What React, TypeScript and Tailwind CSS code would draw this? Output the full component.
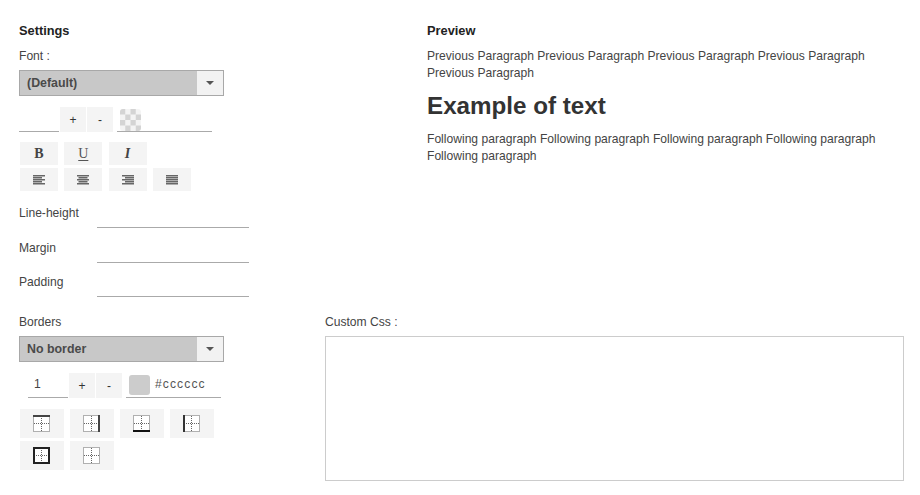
import React from 'react';

const SelectBox = ({ label }: { label: string }) => (
  <div className="flex h-[26px] w-[205px] border border-[#a8a8a8] bg-[#c8c8c8]">
    <div className="flex-1 pl-[7px] text-[12.4px] leading-[24px] font-bold text-[#4a4a4a]">{label}</div>
    <div className="flex w-[26px] items-center justify-center bg-[#f2f2f2]">
      <div className="h-0 w-0 border-x-[4px] border-t-[4px] border-x-transparent border-t-[#555]" />
    </div>
  </div>
);

const Stepper = () => (
  <div className="flex gap-px">
    <div className="flex h-[25px] w-[26px] items-center justify-center bg-[#f4f4f4] text-[12px] text-[#333]">+</div>
    <div className="flex h-[25px] w-[26px] items-center justify-center bg-[#f4f4f4] text-[12px] text-[#333]">-</div>
  </div>
);

const Checker = () => (
  <svg width="21" height="22" viewBox="0 0 21 22" className="rounded-[3px]">
    <rect width="21" height="22" fill="#f4f4f4" />
    {[0, 1, 2, 3].map((r) =>
      [0, 1, 2, 3].map((c) =>
        (r + c) % 2 === 0 ? <rect key={`${r}-${c}`} x={c * 5.25} y={r * 5.5} width="5.25" height="5.5" fill="#d4d4d4" /> : null
      )
    )}
  </svg>
);

const AlignIcon = ({ kind }: { kind: 'left' | 'center' | 'right' | 'justify' }) => {
  const rows = [0, 2, 4, 6, 8];
  return (
    <svg width="12" height="10" viewBox="0 0 12 10">
      {rows.map((y, i) => {
        const w = kind === 'justify' || i % 2 === 0 ? 12 : 9;
        const x = kind === 'right' ? 12 - w : kind === 'center' ? (12 - w) / 2 : 0;
        return <rect key={y} x={x} y={y} width={w} height="1.5" fill="#666" />;
      })}
    </svg>
  );
};

const BorderIcon = ({ side }: { side: 'top' | 'right' | 'bottom' | 'left' | 'all' | 'none' }) => (
  <svg width="17" height="17" viewBox="0 0 17 17">
    <rect x="0.5" y="0.5" width="16" height="16" fill="#fff" stroke="#666" strokeDasharray="1 1" />
    <path d="M8.5 1V16M1 8.5H16" stroke="#666" strokeDasharray="1 1" />
    {side === 'top' && <path d="M0 1H17" stroke="#444" strokeWidth="2" />}
    {side === 'right' && <path d="M16 0V17" stroke="#444" strokeWidth="2" />}
    {side === 'bottom' && <path d="M0 16H17" stroke="#111" strokeWidth="2" />}
    {side === 'left' && <path d="M1 0V17" stroke="#333" strokeWidth="2" />}
    {side === 'all' && <rect x="1" y="1" width="15" height="15" fill="none" stroke="#222" strokeWidth="2" />}
  </svg>
);

const IconBtn = ({ children, wide }: { children: React.ReactNode; wide?: boolean }) => (
  <div className={`flex items-center justify-center bg-[#f4f4f4] ${wide ? 'h-[28.5px] w-[43.5px]' : 'h-[23px] w-[38px]'}`}>
    {children}
  </div>
);

const Field = ({ label }: { label: string }) => (
  <div className="flex h-[34.5px] items-start">
    <div className="w-[78px] pt-[1px] text-[12.1px] leading-[17px] text-[#444]">{label}</div>
    <div className="h-[24px] w-[152px] border-b border-[#aaa]" />
  </div>
);

const App: React.FC = () => {
  return (
    <div className="h-[495px] w-[920px] overflow-hidden bg-white pt-[22px] pl-[19px] font-['Liberation_Sans',Arial,sans-serif] text-[12.1px] text-[#444]">
      <div className="flex h-[292px]">
        {/* Settings column */}
        <div className="w-[408px]">
          <div className="text-[12.8px] leading-[17px] font-bold text-[#222]">Settings</div>
          <div className="mt-[9px] leading-[17px]">Font :</div>
          <div className="mt-[5px]">
            <SelectBox label="(Default)" />
          </div>
          <div className="mt-[10px] flex items-end">
            <div className="h-[26px] w-[40px] border-b border-[#aaa]" />
            <div className="ml-px">
              <Stepper />
            </div>
            <div className="ml-[4px] flex h-[26px] w-[95px] items-start border-b border-[#aaa] pt-[3px] pl-[3px]">
              <Checker />
            </div>
          </div>
          <div className="mt-[10px] ml-px flex gap-[6.3px]">
            <IconBtn><span className="font-['Liberation_Serif',serif] text-[14px] font-bold text-[#444]">B</span></IconBtn>
            <IconBtn><span className="font-['Liberation_Serif',serif] text-[14px] text-[#555] underline underline-offset-2">U</span></IconBtn>
            <IconBtn><span className="font-['Liberation_Serif',serif] text-[14px] font-bold text-[#444] italic">I</span></IconBtn>
          </div>
          <div className="mt-[3px] ml-px flex gap-[6.3px]">
            <IconBtn><AlignIcon kind="left" /></IconBtn>
            <IconBtn><AlignIcon kind="center" /></IconBtn>
            <IconBtn><AlignIcon kind="right" /></IconBtn>
            <IconBtn><AlignIcon kind="justify" /></IconBtn>
          </div>
          <div className="mt-[13px]">
            <Field label="Line-height" />
            <Field label="Margin" />
            <Field label="Padding" />
          </div>
        </div>
        {/* Preview column */}
        <div className="w-[460px]">
          <div className="text-[12.8px] leading-[17px] font-bold text-[#222]">Preview</div>
          <p className="mt-[9px] leading-[17px]">
            Previous Paragraph Previous Paragraph Previous Paragraph Previous Paragraph Previous Paragraph
          </p>
          <h1 className="mt-[10px] text-[24.2px] leading-[28px] font-bold text-[#333]">Example of text</h1>
          <p className="mt-[11px] leading-[17px]">
            Following paragraph Following paragraph Following paragraph Following paragraph Following paragraph
          </p>
        </div>
      </div>
      <div className="flex">
        {/* Borders column */}
        <div className="w-[306px]">
          <div className="leading-[17px]">Borders</div>
          <div className="mt-[5px]">
            <SelectBox label="No border" />
          </div>
          <div className="mt-[10px] ml-[9px] flex items-end">
            <div className="h-[26px] w-[40px] border-b border-[#aaa] pl-[6px] leading-[25px]">1</div>
            <div className="ml-px">
              <Stepper />
            </div>
            <div className="ml-[4px] flex h-[26px] w-[95px] items-center border-b border-[#aaa] pl-[3px]">
              <div className="h-[20px] w-[21px] rounded-[3px] bg-[#cccccc]" />
              <span className="ml-[5px] tracking-[1.1px] text-[#555]">#cccccc</span>
            </div>
          </div>
          <div className="mt-[11px] ml-px flex w-[200px] flex-wrap gap-x-[6.5px] gap-y-[3.5px]">
            <IconBtn wide><BorderIcon side="top" /></IconBtn>
            <IconBtn wide><BorderIcon side="right" /></IconBtn>
            <IconBtn wide><BorderIcon side="bottom" /></IconBtn>
            <IconBtn wide><BorderIcon side="left" /></IconBtn>
            <IconBtn wide><BorderIcon side="all" /></IconBtn>
            <IconBtn wide><BorderIcon side="none" /></IconBtn>
          </div>
        </div>
        {/* Custom css column */}
        <div className="w-[579px]">
          <div className="leading-[17px]">Custom Css :</div>
          <div className="mt-[5px] h-[145px] border border-[#ccc]" />
        </div>
      </div>
    </div>
  );
};

export default App;
